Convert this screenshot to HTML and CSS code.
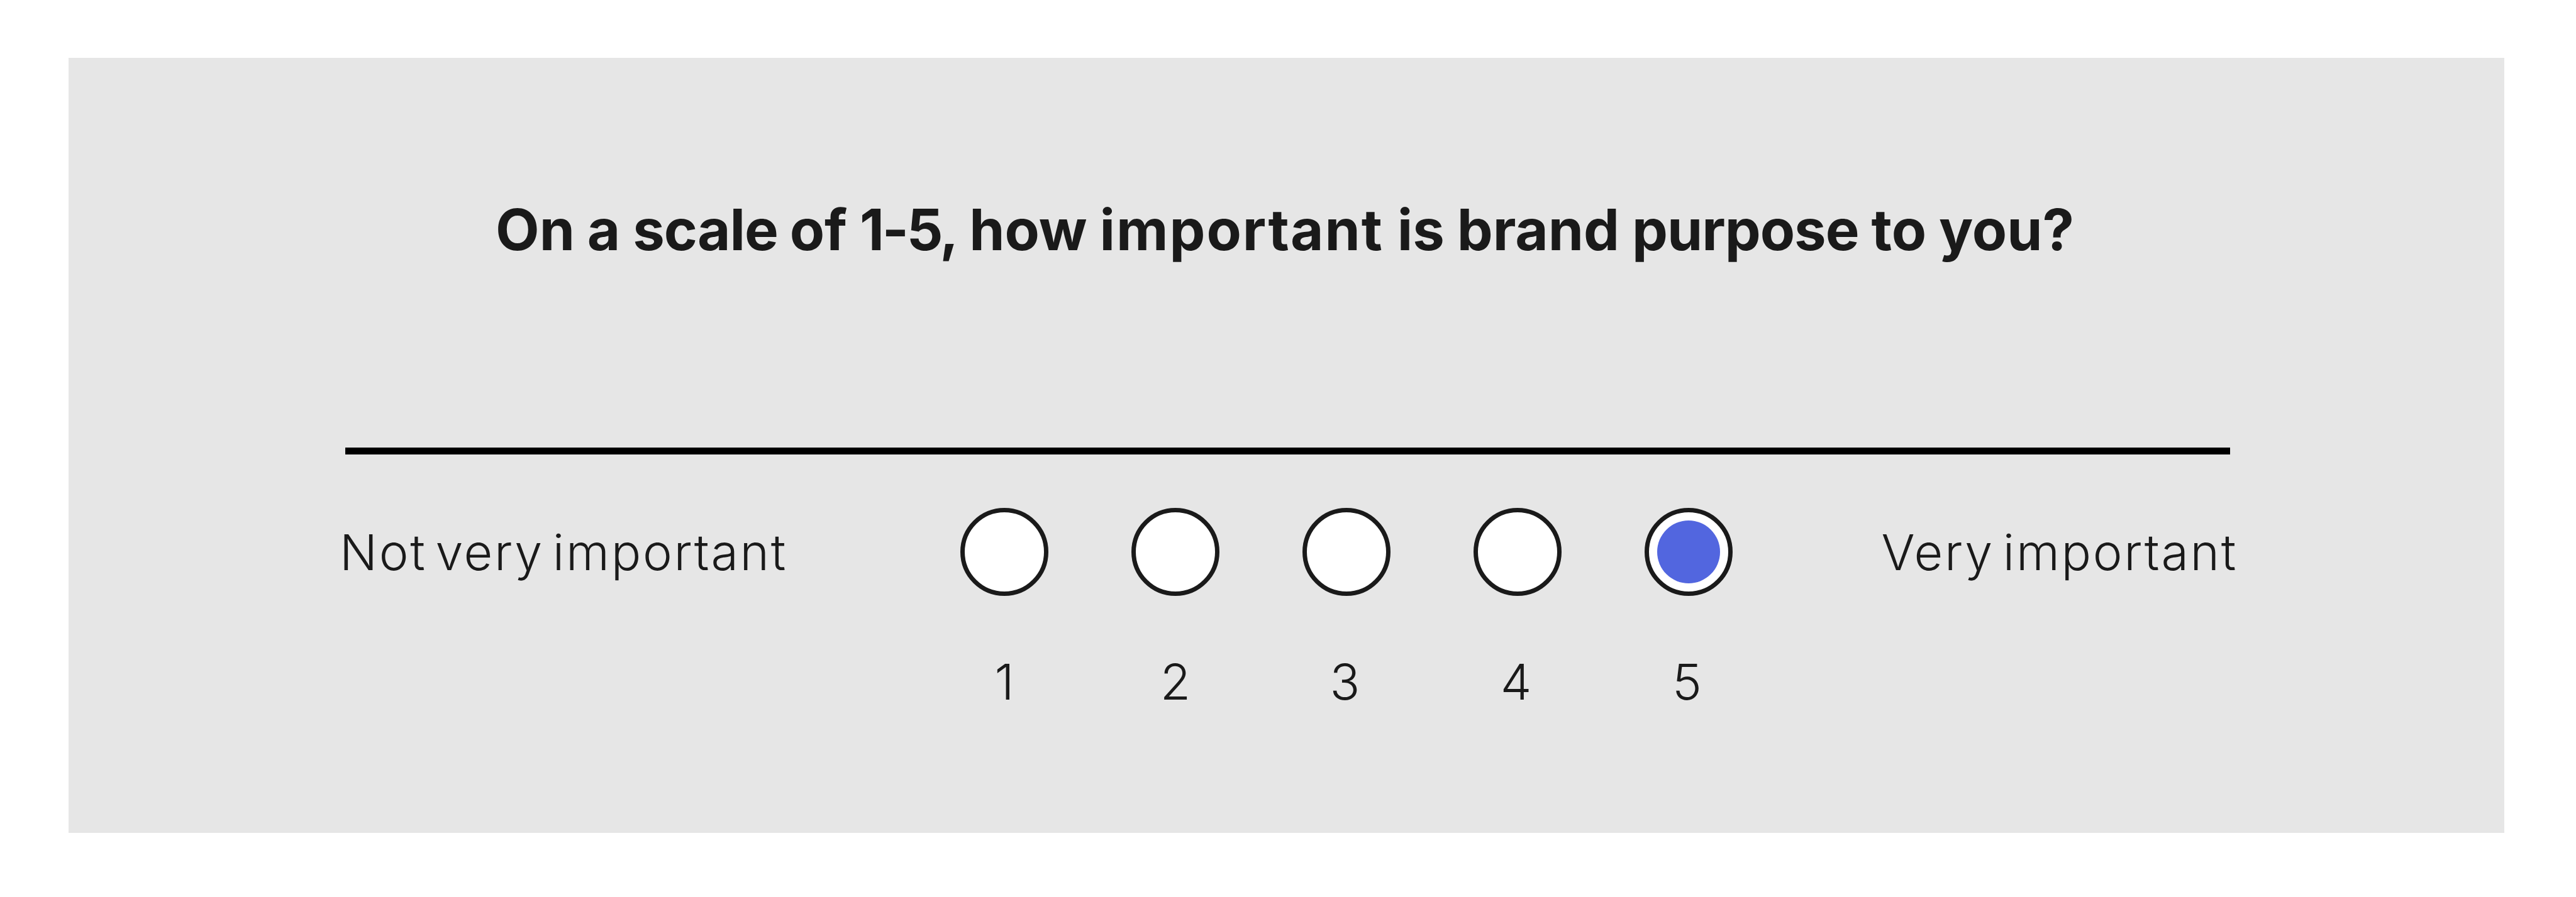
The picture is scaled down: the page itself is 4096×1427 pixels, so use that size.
FILE: index.html
```
<!DOCTYPE html>
<html lang="en">
<head>
    <meta charset="UTF-8">
    <meta name="viewport" content="width=device-width, initial-scale=1.0">
    <title>Survey</title>
    <link rel="stylesheet" href="styles.css">
</head>
<body>
    <form class="card">
        <h1>On a <span class="tight">scale </span>of <span class="range">1-5,</span> how <span class="wide">important </span>is brand <span class="tight">purpose</span> to you?</h1>
        <hr class="line">
        <div class="scale">
            <div class="label">Not very important</div>
            <div class="options">
                <label class="option"><input type="radio" name="score" value="1"><span>1</span></label>
                <label class="option"><input type="radio" name="score" value="2"><span>2</span></label>
                <label class="option"><input type="radio" name="score" value="3"><span>3</span></label>
                <label class="option"><input type="radio" name="score" value="4"><span>4</span></label>
                <label class="option"><input type="radio" name="score" value="5" checked><span>5</span></label>
            </div>
            <div class="label label-right">Very important</div>
        </div>
    </form>
</body>
</html>
```
FILE: styles.css
```
* {
    box-sizing: border-box;
}
body {
    margin: 0;
    padding: 92px 114px 102px 109px;
    background-color: #fff;
    font-family: Inter, "Liberation Sans", sans-serif;
    color: #1a1a1a;
}
.card {
    height: 1233px;
    padding: 218px 424px 0 431px;
    background-color: #e6e6e6;
}
h1 {
    margin: 0 0 292px;
    padding-left: 248px;
    font-size: 90.4px;
    font-weight: 700;
    line-height: 110px;
    white-space: nowrap;
    word-spacing: -1.5px;
}
.tight {
    letter-spacing: -1px;
}
.range {
    letter-spacing: -3.2px;
}
.wide {
    letter-spacing: 2px;
}
.line {
    width: 2997px;
    height: 11px;
    margin: 0 0 85px 9px;
    border: none;
    background-color: #000;
}
.scale {
    display: flex;
    justify-content: space-between;
}
.label {
    width: 987px;
    font-size: 79px;
    font-weight: 300;
    letter-spacing: 2.7px;
    word-spacing: -11px;
    line-height: 140px;
    white-space: nowrap;
}
.label-right {
    width: 803px;
    text-align: right;
}
.options {
    display: flex;
    gap: 132px;
}
.option {
    display: flex;
    flex-direction: column;
    align-items: center;
    gap: 86px;
    width: 140px;
    font-size: 79px;
    font-weight: 300;
    line-height: 100px;
    cursor: pointer;
}
.option:nth-child(n+3) span {
    padding-right: 5px;
}
.option input {
    display: grid;
    place-content: center;
    width: 140px;
    height: 140px;
    margin: 0;
    appearance: none;
    border: 7px solid #1a1a1a;
    border-radius: 50%;
    background-color: #fff;
    cursor: pointer;
}
.option input:checked::before {
    content: "";
    width: 100px;
    height: 100px;
    border-radius: 50%;
    background-color: #5266df;
}
```
